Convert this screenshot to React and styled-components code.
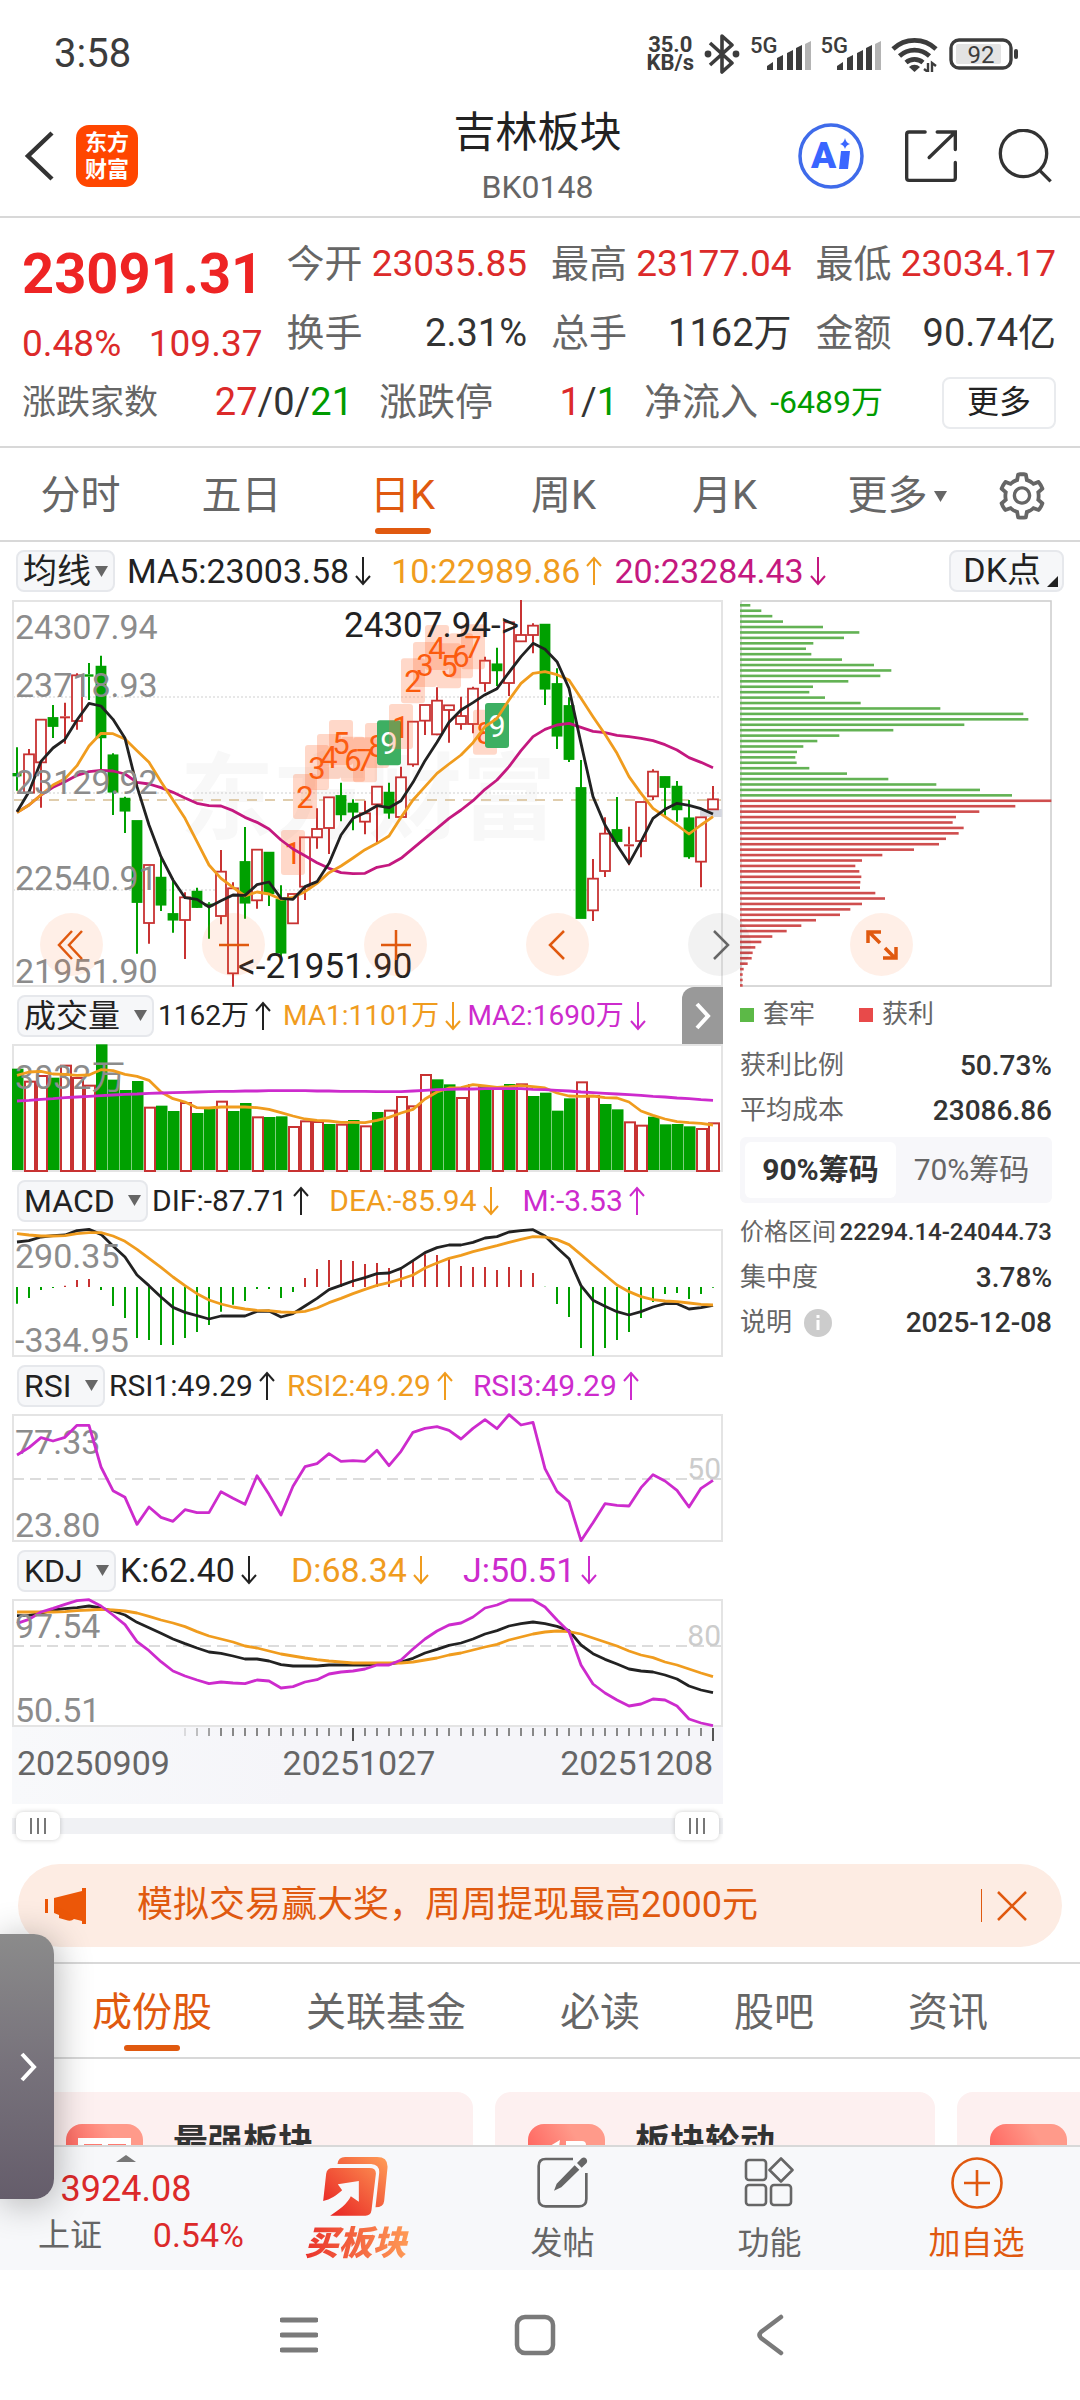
import React, { Fragment } from 'react';
import styled, { createGlobalStyle, css } from 'styled-components';
import { AiOutlineSetting } from 'react-icons/ai';

const colors = {
  text: '#222222',
  dark: '#333333',
  gray: '#666666',
  axis: '#8c8c8c',
  red: '#dc2a2a',
  green: '#009b00',
  candleRed: '#c83232',
  candleGreen: '#00a000',
  brand: '#e0590f',
  orange: '#f09c1e',
  magenta: '#c4187f',
  purple: '#cd2bcd',
  line: '#d8d8d8',
  frame: '#e4e4e4',
  panel: '#f6f7f9',
};

const GlobalStyle = createGlobalStyle`
  * {
    box-sizing: border-box;
  }

  body {
    margin: 0;
    background: #ffffff;
    color: ${colors.text};
    font-family: Roboto, 'Noto Sans CJK SC', sans-serif;
    line-height: 1.2;
  }

  button,
  select,
  input {
    margin: 0;
    padding: 0;
    border: 0;
    background: none;
    color: inherit;
    font: inherit;
  }

  svg {
    display: block;
    flex-shrink: 0;
  }
`;

/* ---------- data ---------- */

const COUNT = 59;
const STEP = 12;

// [up, high, open/close top, open/close bottom, low], three units per pixel
const candles = [
  [0, 472, 549, 559, 602],
  [1, 477, 493, 608, 608],
  [1, 388, 389, 517, 653],
  [0, 345, 384, 408, 444],
  [1, 338, 379, 383, 461],
  [1, 250, 256, 393, 419],
  [0, 219, 253, 260, 330],
  [0, 197, 230, 442, 540],
  [0, 490, 496, 605, 675],
  [0, 620, 626, 662, 729],
  [0, 693, 693, 936, 1091],
  [1, 825, 825, 999, 1061],
  [0, 795, 863, 944, 963],
  [0, 865, 972, 989, 1028],
  [1, 907, 922, 990, 1107],
  [0, 893, 905, 951, 953],
  [0, 937, 941, 949, 1046],
  [1, 780, 845, 978, 1003],
  [1, 877, 895, 1150, 1190],
  [0, 711, 816, 938, 986],
  [1, 779, 779, 931, 956],
  [0, 786, 788, 910, 948],
  [0, 886, 930, 1088, 1103],
  [1, 912, 912, 1000, 1000],
  [1, 742, 742, 890, 930],
  [1, 655, 717, 742, 776],
  [1, 622, 622, 714, 792],
  [0, 578, 618, 673, 694],
  [0, 628, 641, 665, 721],
  [1, 632, 670, 695, 733],
  [1, 590, 590, 643, 757],
  [0, 578, 608, 668, 686],
  [1, 530, 562, 681, 681],
  [1, 395, 395, 523, 530],
  [1, 345, 345, 392, 435],
  [1, 292, 332, 433, 436],
  [1, 346, 346, 360, 458],
  [1, 320, 378, 402, 419],
  [1, 290, 296, 402, 430],
  [1, 200, 212, 279, 305],
  [0, 173, 223, 241, 288],
  [1, 93, 97, 279, 318],
  [1, 30, 135, 154, 154],
  [1, 100, 107, 135, 190],
  [0, 104, 104, 296, 345],
  [0, 235, 282, 437, 477],
  [0, 322, 348, 507, 516],
  [0, 510, 594, 984, 984],
  [1, 807, 866, 961, 993],
  [1, 682, 731, 843, 861],
  [0, 621, 720, 753, 768],
  [1, 710, 763, 769, 826],
  [1, 636, 636, 753, 802],
  [1, 538, 545, 619, 630],
  [0, 560, 561, 591, 677],
  [0, 573, 590, 658, 695],
  [0, 630, 685, 799, 806],
  [1, 682, 682, 815, 892],
  [1, 588, 628, 658, 658],
];

const ma5 = [
  665, 605, 514, 474, 448, 390, 340, 348, 388, 445, 590, 705, 800, 870, 923,
  928, 951, 932, 915, 916, 884, 876, 925, 928, 890, 875, 820, 735, 685, 668,
  647, 653, 632, 577, 512, 457, 397, 360, 338, 314, 296, 247, 200, 160, 178,
  215, 295, 460, 620, 705, 765, 820, 755, 685, 658, 640, 646, 656, 672,
];
const ma10 = [
  668, 645, 615, 585, 566, 527, 468, 430, 431, 447, 482, 517, 575, 630, 685,
  755, 825, 865, 892, 918, 906, 912, 928, 922, 905, 880, 848, 828, 804, 779,
  760, 738, 682, 630, 590, 550, 522, 495, 458, 410, 385, 330, 280, 250, 245,
  254, 270, 325, 380, 433, 490, 560, 610, 655, 680, 705, 732, 705, 680,
];
const ma20 = [
  667, 645, 615, 592, 575, 556, 545, 541, 543, 552, 577, 582, 593, 607, 624,
  640, 647, 648, 662, 682, 697, 717, 750, 777, 797, 818, 835, 848, 851, 850,
  832, 825, 805, 775, 745, 715, 685, 660, 632, 598, 570, 530, 482, 440, 418,
  405, 400, 412, 424, 428, 436, 440, 445, 452, 464, 480, 503, 517, 533,
];

// top of each 1-9 marker, from the 24th session on
const signals = [
  720, 552, 465, 432, 390, 440, 442, 399, 391, 342, 205, 156, 105, 160, 130,
  103, 359, 339,
];

const volumes = [
  235, 271, 254, 262, 223, 260, 283, 162, 268, 299, 272, 349, 346, 362, 335,
  368, 355, 331, 362, 338, 378, 380, 378, 407, 390, 392, 401, 400, 389, 405,
  365, 358, 317, 345, 251, 267, 282, 320, 281, 287, 288, 281, 279, 317, 307,
  361, 324, 273, 314, 341, 357, 393, 403, 379, 402, 401, 408, 413, 396,
];
const volumeUp =
  '01101110000100100100100111010101111001101010000110011000011';
const volumeMa1 = [
  255, 245, 243, 251, 252, 255, 254, 238, 241, 252, 258, 270, 305, 325, 335,
  352, 353, 350, 350, 350, 352, 357, 367, 377, 386, 390, 392, 396, 396, 397,
  390, 381, 368, 357, 326, 305, 293, 292, 283, 287, 291, 289, 286, 289, 293,
  308, 317, 318, 317, 322, 323, 335, 362, 375, 386, 394, 397, 399, 404,
];
const volumeMa2 = [
  332, 330, 327, 325, 322, 320, 318, 316, 314, 312, 311, 309, 308, 307, 306,
  305, 304, 303, 303, 302, 302, 301, 301, 301, 301, 302, 302, 303, 303, 303,
  304, 304, 304, 302, 300, 298, 297, 296, 296, 295, 295, 295, 295, 297, 298,
  300, 302, 305, 307, 309, 311, 313, 315, 318, 320, 323, 325, 328, 330,
];

const macdBars = [
  941, 924, 900, 894, 887, 870, 867, 900, 948, 984, 1044, 1050, 1065, 1065,
  1044, 1026, 1005, 965, 944, 933, 897, 897, 924, 906, 864, 837, 810, 810, 813,
  822, 819, 834, 836, 812, 793, 795, 807, 828, 831, 831, 840, 831, 840, 849,
  890, 942, 981, 1074, 1098, 1074, 1050, 1026, 984, 936, 912, 909, 927, 912,
  893,
];
const dif = [
  756, 752, 741, 737, 735, 722, 718, 733, 768, 801, 855, 887, 921, 952, 967,
  977, 987, 978, 978, 978, 964, 963, 981, 971, 948, 925, 899, 886, 873, 863,
  851, 849, 835, 812, 788, 773, 765, 765, 757, 744, 740, 726, 722, 719, 738,
  773, 806, 887, 931, 949, 965, 975, 965, 951, 941, 941, 957, 953, 946,
];
const dea = [
  731, 735, 738, 738, 737, 731, 728, 728, 738, 754, 778, 805, 832, 861, 887,
  911, 930, 942, 951, 957, 961, 962, 966, 967, 964, 954, 938, 925, 911, 898,
  886, 878, 867, 855, 834, 819, 805, 796, 785, 776, 767, 757, 748, 740, 741,
  749, 764, 794, 825, 855, 885, 905, 920, 929, 933, 935, 939, 943, 945,
];

const rsi = [
  284, 262, 232, 242, 231, 195, 195, 320, 391, 411, 492, 440, 471, 483, 448,
  457, 457, 394, 414, 432, 346, 402, 464, 378, 319, 310, 280, 303, 301, 303,
  270, 316, 273, 216, 204, 199, 210, 236, 204, 178, 205, 163, 194, 186, 325,
  393, 424, 541, 487, 430, 435, 437, 382, 343, 362, 390, 440, 384, 360,
];

const kdjK = [
  767, 766, 760, 750, 746, 743, 738, 744, 753, 765, 787, 803, 820, 837, 851,
  864, 876, 880, 888, 897, 897, 903, 914, 918, 918, 918, 915, 915, 915, 915,
  914, 912, 906, 895, 879, 868, 856, 849, 837, 822, 812, 798, 791, 786, 791,
  799, 812, 855, 881, 898, 912, 927, 933, 936, 945, 957, 978, 990, 998,
];
const kdjD = [
  756, 756, 756, 756, 755, 752, 750, 748, 750, 753, 759, 769, 780, 789, 800,
  815, 828, 837, 846, 858, 864, 873, 882, 888, 894, 899, 903, 906, 909, 909,
  909, 909, 909, 906, 900, 894, 885, 879, 870, 861, 853, 840, 831, 822, 816,
  813, 815, 822, 834, 846, 858, 873, 885, 893, 906, 915, 927, 939, 950,
];
const kdjJ = [
  790, 778, 756, 745, 733, 722, 719, 738, 765, 794, 845, 872, 905, 933, 948,
  960, 971, 966, 969, 971, 960, 963, 984, 980, 966, 959, 942, 936, 933, 927,
  915, 915, 900, 867, 837, 813, 795, 789, 771, 744, 735, 720, 720, 720, 741,
  780, 815, 915, 972, 999, 1020, 1038, 1032, 1017, 1020, 1038, 1077, 1089,
  1097,
];

const trapped = [
  31, 64, 97, 129, 249, 358, 312, 220, 198, 214, 306, 402, 454, 421, 325, 219,
  208, 255, 362, 601, 850, 865, 673, 460, 298, 232, 190, 171, 166, 170, 208,
  321, 445, 589, 720, 816,
];
const profit = [
  934, 826, 718, 648, 638, 671, 656, 618, 597, 522, 427, 366, 346, 358, 364,
  361, 360, 406, 435, 366, 331, 300, 228, 184, 140, 97, 64, 46, 38, 35, 23, 11,
  8, 8, 8,
];

const quotes = [
  [
    { label: '今开', value: '23035.85', tone: 'red' },
    { label: '换手', value: '2.31%' },
  ],
  [
    { label: '最高', value: '23177.04', tone: 'red' },
    { label: '总手', value: '1162万' },
  ],
  [
    { label: '最低', value: '23034.17', tone: 'red' },
    { label: '金额', value: '90.74亿' },
  ],
];

const periods = ['分时', '五日', '日K', '周K', '月K'];
const sections = ['成份股', '关联基金', '必读', '股吧', '资讯'];

/* ---------- status bar and header ---------- */

const Screen = styled.div`
  display: flex;
  flex-direction: column;
  height: 100vh;
  overflow: hidden;
  background: #ffffff;
`;

const StatusBar = styled.div`
  display: flex;
  align-items: center;
  justify-content: space-between;
  height: 108px;
  padding: 0 61px 0 54px;
  color: #3c3c3c;
`;

const Clock = styled.span`
  font-size: 40px;
`;

const StatusIcons = styled.div`
  display: flex;
  align-items: center;
  gap: 10px;
`;

const Speed = styled.span`
  font-size: 22px;
  font-weight: 700;
  line-height: 17px;
  text-align: center;

  span {
    display: block;
    line-height: 18px;
  }
`;

const Signal = styled.div`
  display: flex;
  align-items: flex-end;
  height: 32px;
`;

const SignalLabel = styled.span`
  align-self: flex-start;
  margin-right: -11px;
  font-size: 22px;
  font-weight: 500;
  line-height: 16px;
`;

const Header = styled.header`
  display: grid;
  grid-template-columns: 1fr auto 1fr;
  align-items: center;
  height: 110px;
  padding: 0 28px 12px 23px;
  border-bottom: 2px solid ${colors.line};
`;

const HeaderSide = styled.div`
  display: flex;
  align-items: center;
  justify-content: ${({ $end }) => ($end ? 'flex-end' : 'flex-start')};
  gap: ${({ $end }) => ($end ? '40px' : '21px')};
`;

const IconButton = styled.button`
  display: flex;
  align-items: center;
  justify-content: center;
  color: ${({ $color }) => $color || colors.dark};
`;

const Logo = styled.span`
  display: flex;
  flex-direction: column;
  align-items: center;
  justify-content: center;
  width: 62px;
  height: 62px;
  border-radius: 13px;
  background: #ff4600;
  color: #ffffff;
  font-size: 22px;
  font-weight: 700;
  line-height: 27px;
`;

const Title = styled.div`
  text-align: center;

  h1 {
    margin: 0 0 12px;
    font-size: 42px;
    font-weight: 400;
    line-height: 50px;
  }

  p {
    margin: 0;
    color: ${colors.gray};
    font-size: 32px;
    line-height: 34px;
  }
`;

/* ---------- quote ---------- */

const Main = styled.main`
  flex: 1;
  min-height: 0;
  overflow-y: auto;
  scrollbar-width: none;
`;

const Quote = styled.section`
  padding: 12px 24px 9px 22px;
  border-bottom: 2px solid ${colors.line};
`;

const QuoteGrid = styled.div`
  display: grid;
  grid-template-columns: repeat(4, minmax(0, 1fr));
  column-gap: 24px;
`;

const Price = styled.div`
  height: 89px;
  color: #ee2424;
  font-size: 56px;
  font-weight: 700;
  line-height: 89px;
`;

const Change = styled.div`
  display: flex;
  justify-content: space-between;
  height: 49px;
  color: ${colors.red};
  font-size: 37px;
  line-height: 49px;
`;

const Field = styled.div`
  display: flex;
  align-items: center;
  justify-content: space-between;
  height: 69px;
  color: ${colors.gray};
  font-size: ${({ $small }) => ($small ? '34px' : '38px')};
  white-space: nowrap;
`;

const tones = {
  red: css`
    color: ${colors.red};
    font-size: 37px;
  `,
  small: css`
    color: ${colors.green};
    font-size: 32px;
  `,
  plain: css`
    color: ${colors.dark};
    font-size: 38px;
  `,
};

const Value = styled.span`
  ${({ $tone }) => tones[$tone] || tones.plain};
`;

const Up = styled.span`
  color: ${colors.red};
`;

const Down = styled.span`
  color: ${colors.green};
`;

const BreadthGrid = styled.div`
  display: grid;
  grid-template-columns: 331fr 239fr 239fr 147fr;
  align-items: center;
  column-gap: 26px;
`;

const MoreButton = styled.button`
  justify-self: end;
  width: 114px;
  height: 52px;
  border: 2px solid #e9ebee;
  border-radius: 8px;
  color: ${colors.text};
  font-size: 32px;
`;

/* ---------- tabs ---------- */

const PeriodTabs = styled.nav`
  display: grid;
  grid-template-columns: repeat(5, 161fr) 184fr 66fr 25fr;
  height: 94px;
  padding-top: 4px;
  border-bottom: 2px solid ${colors.line};
`;

const Tab = styled.button`
  display: flex;
  position: relative;
  align-items: center;
  justify-content: center;
  gap: 6px;
  color: ${({ $active }) => ($active ? colors.brand : colors.gray)};
  font-size: 40px;
  white-space: nowrap;

  &::after {
    position: absolute;
    bottom: 6px;
    left: calc(50% - 28px);
    width: 56px;
    height: 6px;
    border-radius: 3px;
    background: ${({ $active }) => ($active ? colors.brand : 'transparent')};
    content: '';
  }
`;

const SectionTabs = styled.nav`
  display: flex;
  gap: 94px;
  height: 97px;
  padding: 4px 0 0 92px;
  border-top: 2px solid ${colors.line};
  border-bottom: 2px solid ${colors.line};
`;

/* ---------- charts ---------- */

const Charts = styled.section`
  position: relative;
  padding: 0 28px 0 12px;
`;

const Columns = styled.div`
  display: grid;
  grid-template-columns: 711fr 312fr;
  column-gap: 17px;
`;

const AverageRow = styled.div`
  display: flex;
  align-items: center;
  height: 58px;
  margin-right: -12px;
  padding-left: 4px;
`;

const IndicatorRow = styled.div`
  display: flex;
  align-items: center;
  height: 57px;
  padding-left: 5px;
`;

const Picker = styled.label`
  display: flex;
  align-items: center;
  gap: ${({ $tight }) => ($tight ? '4px' : '13px')};
  height: 42px;
  margin-right: ${({ $tight }) => ($tight ? '12px' : '4px')};
  padding: 0 5px;
  border: 2px solid #e6e8ec;
  border-radius: 8px;
  background: ${colors.panel};

  select {
    appearance: none;
    font-size: ${({ $tight }) => ($tight ? '34px' : '32px')};
    line-height: 38px;
  }
`;

const DkButton = styled.button`
  display: flex;
  align-items: flex-end;
  gap: 6px;
  height: 42px;
  margin-left: auto;
  padding: 0 4px 3px 12px;
  border: 2px solid #e6e8ec;
  border-radius: 8px;
  background: ${colors.panel};
  color: ${colors.text};
  font-size: 34px;
  line-height: 34px;
`;

const Reading = styled.span`
  display: flex;
  align-items: center;
  gap: 6px;
  margin-right: ${({ $gap }) => $gap || 12}px;
  color: ${({ $color }) => $color || colors.text};
  font-size: ${({ $size }) => $size}px;
  white-space: nowrap;
`;

const ExpandButton = styled.button`
  display: flex;
  align-items: center;
  justify-content: center;
  align-self: stretch;
  width: 41px;
  margin-left: auto;
  border-radius: 12px 0 0 0;
  background: #999999;
`;

const Plot = styled.svg`
  width: 100%;
  height: auto;
  overflow: visible;
`;

const AxisPanel = styled.div`
  height: 77px;
  background: linear-gradient(90deg, #f8f9fb, #f5f5f9 40%);
`;

const Dates = styled.div`
  display: grid;
  grid-template-columns: 266fr 278fr auto;
  margin-top: 3px;
  padding: 0 10px 0 5px;
  color: ${colors.gray};
  font-size: 34px;
  line-height: 38px;
`;

const Range = styled.div`
  display: grid;
  align-items: center;
  height: 44px;
  padding: 0 4px;
  background: linear-gradient(#f0f1f4, #f0f1f4) center / 100% 16px no-repeat;

  input {
    grid-area: 1 / 1;
    width: 100%;
    appearance: none;
    pointer-events: none;
  }

  input::-webkit-slider-thumb {
    width: 44px;
    height: 28px;
    border-radius: 7px;
    background:
      linear-gradient(#777777, #777777) 14px 6px / 2px 16px no-repeat,
      linear-gradient(#777777, #777777) 21px 6px / 2px 16px no-repeat,
      linear-gradient(#777777, #777777) 28px 6px / 2px 16px no-repeat,
      #ffffff;
    box-shadow: 0 0 5px rgba(0, 0, 0, 0.2);
    appearance: none;
    pointer-events: auto;
  }
`;

const PlotTools = styled.div`
  display: flex;
  position: absolute;
  top: 371px;
  right: 167px;
  left: 40px;
  justify-content: space-between;
`;

const ToolButton = styled.button`
  display: flex;
  align-items: center;
  justify-content: center;
  width: 63px;
  height: 63px;
  border-radius: 50%;
  background: ${({ $muted }) =>
    $muted ? 'rgba(0, 0, 0, 0.05)' : 'rgba(255, 100, 20, 0.1)'};
  color: ${({ $muted }) => ($muted ? colors.gray : colors.brand)};
`;

/* ---------- chip distribution ---------- */

const Legend = styled.div`
  display: flex;
  gap: 44px;
  height: 56px;
`;

const LegendItem = styled.span`
  display: flex;
  align-items: center;
  gap: 9px;
  color: ${colors.gray};
  font-size: 26px;

  &::before {
    width: 14px;
    height: 14px;
    background: ${({ $color }) => $color};
    content: '';
  }
`;

const Stat = styled.div`
  display: flex;
  align-items: center;
  justify-content: space-between;
  height: 45px;
  color: ${colors.gray};
  font-size: ${({ $dense }) => ($dense ? '24px' : '26px')};
  white-space: nowrap;

  strong {
    color: ${colors.dark};
    font-size: ${({ $dense }) => ($dense ? '24px' : '28px')};
    font-weight: 500;
  }

  span {
    display: flex;
    align-items: center;
    gap: 12px;
  }
`;

const Segmented = styled.div`
  display: grid;
  grid-template-columns: 1fr 1fr;
  height: 66px;
  margin: 4px 0 7px;
  padding: 5px;
  border-radius: 6px;
  background: #f7f7fa;
`;

const Segment = styled.button`
  border-radius: 6px;
  background: ${({ $active }) => ($active ? '#ffffff' : 'transparent')};
  color: ${({ $active }) => ($active ? colors.dark : colors.gray)};
  font-size: 30px;
  font-weight: ${({ $active }) => ($active ? 700 : 400)};
  white-space: nowrap;
`;

/* ---------- lower part ---------- */

const Banner = styled.aside`
  display: flex;
  align-items: center;
  height: 83px;
  margin: 16px 18px 15px;
  padding: 0 34px 0 27px;
  border-radius: 42px;
  background: #fdece3;
  color: ${colors.brand};
  font-size: 36px;
`;

const BannerLink = styled.a`
  flex: 1;
  margin-left: 50px;
  color: inherit;
  text-decoration: none;
`;

const BannerClose = styled.button`
  display: flex;
  align-items: center;
  height: 33px;
  padding-left: 14px;
  border-left: 1px solid ${colors.brand};
`;

const Cards = styled.div`
  display: flex;
  gap: 22px;
  padding: 33px 0 0 33px;
  overflow: hidden;
`;

const Card = styled.a`
  display: flex;
  flex: 0 0 440px;
  align-items: flex-start;
  gap: 30px;
  height: 140px;
  padding: 32px 33px;
  border-radius: 16px;
  background: #fdf0f0;
  color: ${colors.dark};
  font-size: 35px;
  font-weight: 700;
  line-height: 38px;
  text-decoration: none;
`;

const CardIcon = styled.span`
  display: block;
  width: 77px;
  height: 77px;
  border-radius: 16px;
  background: linear-gradient(60deg, #ff4a4a, #ff9a8a 70%);
`;

const BottomBar = styled.footer`
  display: grid;
  grid-template-columns: 252fr repeat(4, 207fr);
  height: 125px;
  border-top: 2px solid ${colors.line};
  background: #f7f8fa;
`;

const IndexBox = styled.a`
  display: flex;
  flex-direction: column;
  align-items: center;
  gap: 2px;
  padding-top: 8px;
  color: ${colors.red};
  font-size: 36px;
  line-height: 50px;
  text-decoration: none;

  p {
    display: flex;
    align-self: stretch;
    justify-content: space-between;
    margin: 0 8px 0 38px;
    font-size: 34px;
    line-height: 38px;
  }

  small {
    color: ${colors.gray};
    font-size: 32px;
  }
`;

const Action = styled.button`
  display: flex;
  flex-direction: column;
  align-items: center;
  justify-content: space-between;
  padding: 10px 0 8px;
  color: ${({ $color }) => $color || colors.gray};
  font-size: 32px;
  line-height: 38px;
`;

const BuyLabel = styled.span`
  padding: 0 4px;
  background: linear-gradient(90deg, #e92f2a, #ff9d57);
  background-clip: text;
  color: transparent;
  font-size: 34px;
  font-style: italic;
  font-weight: 900;
`;

const SystemNav = styled.nav`
  display: flex;
  align-items: center;
  justify-content: center;
  gap: 196px;
  height: 130px;
  padding-right: 10px;
  background: #ffffff;
`;

const Drawer = styled.button`
  display: flex;
  position: fixed;
  bottom: 201px;
  left: 0;
  align-items: center;
  justify-content: flex-end;
  width: 54px;
  height: 265px;
  padding-right: 17px;
  border-radius: 0 20px 20px 0;
  background: linear-gradient(#8b8b8b, #77727b 50%, #655d6b);
  box-shadow: 2px 4px 36px rgba(0, 0, 0, 0.3);
`;

/* ---------- pieces ---------- */

const x = i => 5 + i * STEP;

const Curve = ({ values, top, color }) => (
  <polyline
    points={values.map((v, i) => `${x(i)},${(v - top) / 3}`).join(' ')}
    fill="none"
    stroke={color}
    strokeWidth="2.8"
    strokeLinejoin="round"
  />
);

const Frame = ({ height }) => (
  <rect
    x="1"
    y="1"
    width="709"
    height={height - 2}
    fill="none"
    stroke={colors.frame}
    strokeWidth="2"
  />
);

const Label = ({ y, children, ...rest }) => (
  <text x="3" y={y} fontSize="34" fill={colors.axis} {...rest}>
    {children}
  </text>
);

const Arrow = ({ up }) => (
  <svg width="16" height="30" viewBox="0 0 16 30" aria-hidden="true">
    <path
      d={up ? 'M8 29V2M1 10L8 2l7 8' : 'M8 1v27M1 20l7 8 7-8'}
      fill="none"
      stroke="currentColor"
      strokeWidth="2"
    />
  </svg>
);

const Caret = ({ size = 13 }) => (
  <svg width={size} height={size} viewBox="0 0 14 14" aria-hidden="true">
    <path d="M0 1h14L7 13z" fill="#666666" />
  </svg>
);

const IndicatorPicker = ({ name, label, tight }) => (
  <Picker $tight={tight}>
    <select aria-label={label}>
      <option>{name}</option>
    </select>
    <Caret />
  </Picker>
);

const SignalBars = () => (
  <Signal>
    <SignalLabel>5G</SignalLabel>
    <svg width="44" height="29" viewBox="0 0 44 29" aria-hidden="true">
      <g fill="#3c3c3c">
        <path d="M0 29v-4l6-4v8zM10 29V17l6-3v15zM20 29V12l6-3v20zM29 29V7l6-3v25z" />
      </g>
      <path d="M38 29V3l6-3v29z" fill="#b4b4b4" />
    </svg>
  </Signal>
);

const KLineChart = () => (
  <Plot viewBox="0 0 711 387" role="img" aria-label="日K线">
    <text x="168" y="232" fontSize="94" fontWeight="700" fill="#f8f8f8">
      东方财富
    </text>
    {[97, 193, 290].map(y => (
      <path key={y} d={`M1 ${y}H710`} stroke="#cfcfcf" strokeDasharray="2 2" />
    ))}
    <path d="M1 200H710" stroke="#d6bd92" strokeWidth="1.5" strokeDasharray="10 8" />
    <Frame height={387} />
    <rect x="688" y="209" width="22" height="8" fill="#d5d7df" />
    {candles.map(([up, high, top, bottom, low], i) => {
      const color = up ? colors.candleRed : colors.candleGreen;
      const y = v => (v - 30) / 3;
      const bodyHeight = Math.max((bottom - top) / 3, 2);
      return (
        <Fragment key={i}>
          <path
            d={`M${x(i)} ${y(high)}V${y(top)}M${x(i)} ${y(bottom)}V${y(low)}`}
            stroke={color}
            strokeWidth="2"
          />
          <rect
            x={x(i) - (up ? 5 : 4.5)}
            y={y(top)}
            width={up ? 10 : 9}
            height={bodyHeight}
            fill={up && bodyHeight > 3 ? '#ffffff' : color}
            stroke={up && bodyHeight <= 3 ? 'none' : color}
            strokeWidth={bodyHeight <= 4 ? 0 : 1.8}
          />
        </Fragment>
      );
    })}
    {signals.map((top, i) => {
      const number = (i % 9) + 1;
      const last = number === 9;
      const cx = x(i + 23);
      const y = (top - 30) / 3;
      return (
        <Fragment key={i}>
          <rect
            x={cx - 12}
            y={y}
            width="24"
            height="45"
            rx="3"
            fill={last ? '#3daf62' : '#ff6a2e'}
            fillOpacity={last ? 1 : 0.26}
          />
          <text
            x={cx}
            y={y + 34}
            fontSize="31"
            textAnchor="middle"
            fill={last ? '#ffffff' : '#fb5a0c'}
          >
            {number}
          </text>
        </Fragment>
      );
    })}
    <Curve values={ma20} top={30} color={colors.magenta} />
    <Curve values={ma10} top={30} color={colors.orange} />
    <Curve values={ma5} top={30} color={colors.text} />
    <Label y={39}>24307.94</Label>
    <Label y={97}>23718.93</Label>
    <Label y={194}>23129.92</Label>
    <Label y={290}>22540.91</Label>
    <Label y={383}>21951.90</Label>
    <Label x={507} y={37} fill={colors.text} fontSize={35} textAnchor="end">
      {'24307.94->'}
    </Label>
    <Label x={226} y={378} fill={colors.text} fontSize={35}>
      {'<-21951.90'}
    </Label>
  </Plot>
);

const VolumeChart = () => (
  <Plot viewBox="0 0 711 128" role="img" aria-label="成交量">
    <Frame height={128} />
    {volumes.map((v, i) => {
      const up = volumeUp[i] === '1';
      const y = (v - 161) / 3;
      return (
        <rect
          key={i}
          x={i * STEP + (up ? 1 : 0)}
          y={y + (up ? 1 : 0)}
          width={up ? 10 : 11.5}
          height={126 - y}
          fill={up ? '#ffffff' : colors.candleGreen}
          stroke={up ? colors.candleRed : 'none'}
          strokeWidth="2"
        />
      );
    })}
    <Label y={45}>3032万</Label>
    <Curve values={volumeMa1} top={161} color={colors.orange} />
    <Curve values={volumeMa2} top={161} color={colors.purple} />
  </Plot>
);

const MacdChart = () => (
  <Plot viewBox="0 0 711 128" role="img" aria-label="MACD">
    <Frame height={128} />
    {macdBars.map((v, i) => (
      <path
        key={i}
        d={`M${x(i)} 58V${(v - 717) / 3}`}
        stroke={v < 890 ? colors.candleRed : colors.candleGreen}
        strokeWidth="2"
      />
    ))}
    <Curve values={dif} top={717} color={colors.text} />
    <Curve values={dea} top={717} color={colors.orange} />
    <Label y={39}>290.35</Label>
    <Label y={123}>-334.95</Label>
  </Plot>
);

const RsiChart = () => (
  <Plot viewBox="0 0 711 128" role="img" aria-label="RSI">
    <Frame height={128} />
    <path d="M1 65H710" stroke="#dcdcdc" strokeWidth="2" strokeDasharray="11 6" />
    <Label x={709} y={65} fill="#cccccc" textAnchor="end" fontSize={30}>
      50
    </Label>
    <Label y={40}>77.33</Label>
    <Label y={123}>23.80</Label>
    <Curve values={rsi} top={161} color={colors.purple} />
  </Plot>
);

const KdjChart = () => (
  <Plot viewBox="0 0 711 128" role="img" aria-label="KDJ">
    <Frame height={128} />
    <path d="M1 47H710" stroke="#dcdcdc" strokeWidth="2" strokeDasharray="11 6" />
    <Label x={709} y={47} fill="#cccccc" textAnchor="end" fontSize={30}>
      80
    </Label>
    <Curve values={kdjK} top={717} color={colors.text} />
    <Curve values={kdjD} top={717} color={colors.orange} />
    <Curve values={kdjJ} top={717} color={colors.purple} />
    <Label y={39}>97.54</Label>
    <Label y={123}>50.51</Label>
  </Plot>
);

const Ticks = () => (
  <Plot viewBox="0 0 711 14" aria-hidden="true">
    {Array.from({ length: COUNT }, (_, i) => i)
      .filter(i => i >= 14)
      .map(i => {
        const major = i === 28 || i === 58;
        return (
          <path
            key={i}
            d={`M${x(i)} 1V${major ? 14 : 9}`}
            stroke={major ? '#555555' : '#888888'}
            strokeWidth="2"
            opacity={Math.min(1, (i - 13) / 4)}
          />
        );
      })}
  </Plot>
);

const ChipChart = () => (
  <Plot viewBox="0 0 312 387" role="img" aria-label="筹码分布">
    <rect
      x="1"
      y="1"
      width="310"
      height="385"
      fill="none"
      stroke="#cccccc"
      strokeWidth="1.5"
    />
    {[...trapped, ...profit].map((w, i) => (
      <rect
        key={i}
        x="0"
        y={4 + i * 5.43}
        width={w / 3}
        height="2.6"
        fill={i < trapped.length ? '#63b254' : '#cf4e4e'}
      />
    ))}
  </Plot>
);

const ToolIcon = ({ d, width = 2.5 }) => (
  <svg width="32" height="32" viewBox="0 0 32 32" aria-hidden="true">
    <path d={d} fill="none" stroke="currentColor" strokeWidth={width} />
  </svg>
);

const App = () => (
  <Screen>
    <GlobalStyle />

    <StatusBar>
      <Clock>3:58</Clock>
      <StatusIcons>
        <Speed>
          <span>35.0</span>
          <span>KB/s</span>
        </Speed>
        <svg width="36" height="40" viewBox="0 0 36 40" aria-hidden="true">
          <path
            d="M6 9l22 20-10 9V2l10 9L6 31"
            fill="none"
            stroke="#3c3c3c"
            strokeWidth="3.6"
            strokeLinejoin="round"
          />
          <circle cx="4" cy="20" r="3.4" fill="#3c3c3c" />
          <circle cx="32" cy="20" r="3.4" fill="#3c3c3c" />
        </svg>
        <SignalBars />
        <SignalBars />
        <svg width="48" height="36" viewBox="0 0 48 36" aria-hidden="true">
          <g fill="none" stroke="#3c3c3c" strokeWidth="4.6">
            <path d="M2 13a31 31 0 0 1 43 0" />
            <path d="M8.500 20a22 22 0 0 1 30 0" />
            <path d="M15 26.500a13 13 0 0 1 17 0" />
          </g>
          <path d="M18 31a8 8 0 0 1 11 0l-5.500 5z" fill="#3c3c3c" />
          <path d="M37 27v9m-4-3l4 3M41 36v-9l4 3" stroke="#3c3c3c" strokeWidth="2.400" fill="none" />
        </svg>
        <svg width="70" height="32" viewBox="0 0 70 32" aria-hidden="true">
          <rect x="2" y="2" width="60" height="28" rx="8" fill="none" stroke="#3c3c3c" strokeWidth="3.400" />
          <rect x="7" y="6" width="45" height="20" rx="2" fill="#e3e3e3" />
          <rect x="65" y="11" width="4" height="10" rx="2" fill="#3c3c3c" />
          <text x="32" y="25" fontSize="24" textAnchor="middle" fill="#3c3c3c">
            92
          </text>
        </svg>
      </StatusIcons>
    </StatusBar>

    <Header>
      <HeaderSide>
        <IconButton aria-label="返回">
          <svg width="32" height="52" viewBox="0 0 32 52">
            <path d="M29 3L5 26l24 23" fill="none" stroke="currentColor" strokeWidth="4.500" />
          </svg>
        </IconButton>
        <Logo>
          <span>东方</span>
          <span>财富</span>
        </Logo>
      </HeaderSide>
      <Title>
        <h1>吉林板块</h1>
        <p>BK0148</p>
      </Title>
      <HeaderSide $end>
        <IconButton aria-label="AI">
          <svg width="66" height="66" viewBox="0 0 66 66">
            <circle cx="33" cy="33" r="31" fill="none" stroke="#3f6bea" strokeWidth="3.500" />
            <text x="13" y="45" fontSize="37" fontWeight="900" fill="#3a66ff">
              A
            </text>
            <path d="M43 28h9l-2 18h-9z" fill="#3a66ff" />
            <path d="M47 15q1 5 5 6-4 1-5 5-1-4-5-5 4-1 5-6z" fill="#3a66ff" />
          </svg>
        </IconButton>
        <IconButton aria-label="分享">
          <svg width="54" height="54" viewBox="790 327 161 161">
            <path
              d="M853 336H805Q798 336 798 343V473Q798 480 805 480H936Q943 480 943 473V427M889 336H943V388M941 338L865 412"
              fill="none"
              stroke="currentColor"
              strokeWidth="10"
              strokeLinecap="round"
            />
          </svg>
        </IconButton>
        <IconButton aria-label="搜索">
          <svg width="54" height="54" viewBox="1073 325 163 163">
            <circle cx="1150" cy="399" r="70" fill="none" stroke="currentColor" strokeWidth="10" />
            <path d="M1198 449L1232 483" stroke="currentColor" strokeWidth="10" />
          </svg>
        </IconButton>
      </HeaderSide>
    </Header>

    <Main>
      <Quote>
        <QuoteGrid>
          <div>
            <Price>23091.31</Price>
            <Change>
              <span>0.48%</span>
              <span>109.37</span>
            </Change>
          </div>
          {quotes.map(column => (
            <div key={column[0].label}>
              {column.map(({ label, value, tone }) => (
                <Field key={label}>
                  {label}
                  <Value $tone={tone}>{value}</Value>
                </Field>
              ))}
            </div>
          ))}
        </QuoteGrid>
        <BreadthGrid>
          <Field $small>
            涨跌家数
            <Value>
              <Up>27</Up>/0/<Down>21</Down>
            </Value>
          </Field>
          <Field>
            涨跌停
            <Value>
              <Up>1</Up>/<Down>1</Down>
            </Value>
          </Field>
          <Field>
            净流入
            <Value $tone="small">-6489万</Value>
          </Field>
          <MoreButton>更多</MoreButton>
        </BreadthGrid>
      </Quote>

      <PeriodTabs>
        {periods.map(name => (
          <Tab key={name} $active={name === '日K'}>
            {name}
          </Tab>
        ))}
        <Tab>
          更多
          <Caret />
        </Tab>
        <IconButton aria-label="设置" $color={colors.gray}>
          <AiOutlineSetting size={54} />
        </IconButton>
      </PeriodTabs>

      <Charts>
        <AverageRow>
          <IndicatorPicker name="均线" label="主图指标" tight />
          <Reading $size={34} $gap={20}>
            MA5:23003.58
            <Arrow />
          </Reading>
          <Reading $size={34} $color={colors.orange}>
            10:22989.86
            <Arrow up />
          </Reading>
          <Reading $size={34} $color={colors.magenta}>
            20:23284.43
            <Arrow />
          </Reading>
          <DkButton>
            DK点
            <svg width="11" height="11" viewBox="0 0 11 11" aria-hidden="true">
              <path d="M11 0v11H0z" fill="#222222" />
            </svg>
          </DkButton>
        </AverageRow>

        <Columns>
          <div>
            <KLineChart />
            <IndicatorRow>
              <IndicatorPicker name="成交量" label="副图指标一" />
              <Reading $size={28}>
                1162万
                <Arrow up />
              </Reading>
              <Reading $size={28} $gap={6} $color={colors.orange}>
                MA1:1101万
                <Arrow />
              </Reading>
              <Reading $size={28} $color={colors.purple}>
                MA2:1690万
                <Arrow />
              </Reading>
              <ExpandButton aria-label="收起">
                <svg width="16" height="28" viewBox="0 0 16 28">
                  <path d="M2 2l11 12L2 26" fill="none" stroke="#ffffff" strokeWidth="4" />
                </svg>
              </ExpandButton>
            </IndicatorRow>
            <VolumeChart />
            <IndicatorRow>
              <IndicatorPicker name="MACD" label="副图指标二" />
              <Reading $size={30} $gap={20}>
                DIF:-87.71
                <Arrow up />
              </Reading>
              <Reading $size={30} $gap={24} $color={colors.orange}>
                DEA:-85.94
                <Arrow />
              </Reading>
              <Reading $size={30} $color={colors.purple}>
                M:-3.53
                <Arrow up />
              </Reading>
            </IndicatorRow>
            <MacdChart />
            <IndicatorRow>
              <IndicatorPicker name="RSI" label="副图指标三" />
              <Reading $size={30}>
                RSI1:49.29
                <Arrow up />
              </Reading>
              <Reading $size={30} $gap={20} $color={colors.orange}>
                RSI2:49.29
                <Arrow up />
              </Reading>
              <Reading $size={30} $color={colors.purple}>
                RSI3:49.29
                <Arrow up />
              </Reading>
            </IndicatorRow>
            <RsiChart />
            <IndicatorRow>
              <IndicatorPicker name="KDJ" label="副图指标四" />
              <Reading $size={34} $gap={34}>
                K:62.40
                <Arrow />
              </Reading>
              <Reading $size={34} $gap={34} $color={colors.orange}>
                D:68.34
                <Arrow />
              </Reading>
              <Reading $size={34} $color={colors.purple}>
                J:50.51
                <Arrow />
              </Reading>
            </IndicatorRow>
            <KdjChart />
            <AxisPanel>
              <Ticks />
              <Dates>
                <span>20250909</span>
                <span>20251027</span>
                <span>20251208</span>
              </Dates>
            </AxisPanel>
            <Range>
              <input type="range" aria-label="起始日期" defaultValue="0" />
              <input type="range" aria-label="结束日期" defaultValue="100" />
            </Range>
          </div>

          <div>
            <ChipChart />
            <Legend>
              <LegendItem $color="#5cb947">套牢</LegendItem>
              <LegendItem $color="#e84a4a">获利</LegendItem>
            </Legend>
            <Stat>
              获利比例 <strong>50.73%</strong>
            </Stat>
            <Stat>
              平均成本 <strong>23086.86</strong>
            </Stat>
            <Segmented>
              <Segment $active>90%筹码</Segment>
              <Segment>70%筹码</Segment>
            </Segmented>
            <Stat $dense>
              价格区间 <strong>22294.14-24044.73</strong>
            </Stat>
            <Stat>
              集中度 <strong>3.78%</strong>
            </Stat>
            <Stat>
              <span>
                说明
                <svg width="28" height="28" viewBox="0 0 28 28" aria-hidden="true">
                  <circle cx="14" cy="14" r="14" fill="#cccccc" />
                  <path d="M14 6v3M14 11v10" stroke="#ffffff" strokeWidth="3" />
                </svg>
              </span>
              <strong>2025-12-08</strong>
            </Stat>
          </div>
        </Columns>

        <PlotTools>
          <ToolButton aria-label="最早">
            <ToolIcon d="M16 2L3 16l13 14M26 2L13 16l13 14" />
          </ToolButton>
          <ToolButton aria-label="缩小">
            <ToolIcon d="M1 16h30" />
          </ToolButton>
          <ToolButton aria-label="放大">
            <ToolIcon d="M1 16h30M16 1v30" />
          </ToolButton>
          <ToolButton aria-label="向前">
            <ToolIcon d="M22 2L8 16l14 14" />
          </ToolButton>
          <ToolButton aria-label="向后" $muted>
            <ToolIcon d="M10 2l14 14-14 14" />
          </ToolButton>
          <ToolButton aria-label="全屏">
            <ToolIcon width={3.5} d="M2 14V3h13M3 3l11 11M30 18v11H17M29 29L19 19" />
          </ToolButton>
        </PlotTools>
      </Charts>

      <Banner>
        <svg width="42" height="36" viewBox="0 0 42 36" aria-hidden="true">
          <path
            d="M0 11h3v14H0zM9 10L37 3V0h4v36h-4v-3l-8-2q-3 3-8 1l-7-2v-3l-5-2z"
            fill="#ec5708"
          />
        </svg>
        <BannerLink href="#contest">
          模拟交易赢大奖，周周提现最高2000元
        </BannerLink>
        <BannerClose aria-label="关闭">
          <svg width="32" height="32" viewBox="0 0 32 32">
            <path d="M2 2l28 28M30 2L2 30" stroke="currentColor" strokeWidth="2.500" />
          </svg>
        </BannerClose>
      </Banner>

      <SectionTabs>
        {sections.map(name => (
          <Tab key={name} $active={name === '成份股'}>
            {name}
          </Tab>
        ))}
      </SectionTabs>

      <Cards>
        <Card href="#strongest">
          <CardIcon>
            <svg width="77" height="77" viewBox="0 0 77 77" aria-hidden="true">
              <path d="M12 14h53v40H12z" fill="#ffffff" />
              <path d="M18 20h18v6H18zM42 20h18v6H42z" fill="#ff7a70" />
            </svg>
          </CardIcon>
          最强板块
        </Card>
        <Card href="#rotation">
          <CardIcon>
            <svg width="77" height="77" viewBox="0 0 77 77" aria-hidden="true">
              <path d="M22 22l10-6-2 14zM38 17h16q4 0 4 4v12H38z" fill="#ffffff" />
            </svg>
          </CardIcon>
          板块轮动
        </Card>
        <Card href="#more">
          <CardIcon />
        </Card>
      </Cards>
    </Main>

    <BottomBar>
      <IndexBox href="#index">
        <svg width="20" height="7" viewBox="0 0 20 7" aria-hidden="true">
          <path d="M10 0l10 7H0z" fill="#777777" />
        </svg>
        <span>3924.08</span>
        <p>
          <small>上证</small>
          <span>0.54%</span>
        </p>
      </IndexBox>
      <Action>
        <svg width="65" height="59" viewBox="131 140 194 177" aria-hidden="true">
          <defs>
            <linearGradient id="buy" x1="0" y1="1" x2="1" y2="0">
              <stop offset="0.1" stopColor="#e92a26" />
              <stop offset="1" stopColor="#ff9d57" />
            </linearGradient>
          </defs>
          <path
            d="M174 161Q176 140 197 140H293Q326 140 324 172L314 272Q312 291 288 291L299 188Q301 163 275 161ZM160 173H270Q291 173 289 192L276 300Q274 316 258 316H152C178 300 204 280 214 258L238 274V212L175 222L188 240C172 255 152 268 131 272L140 190Q142 173 160 173Z"
            fill="url(#buy)"
          />
        </svg>
        <BuyLabel>买板块</BuyLabel>
      </Action>
      <Action>
        <svg width="51" height="51" viewBox="770 140 153 153" aria-hidden="true">
          <path
            d="M878 146H796Q775 146 775 167V266Q775 288 796 288H896Q918 288 918 266V188"
            fill="none"
            stroke="currentColor"
            strokeWidth="8"
          />
          <path
            d="M821 241l8-21 54-55 14 13-54 53zM890 158l14-14q7-5 14 1 5 7 0 14l-14 13z"
            fill="currentColor"
          />
        </svg>
        发帖
      </Action>
      <Action>
        <svg width="51" height="51" viewBox="0 0 51 51" aria-hidden="true">
          <g fill="none" stroke="currentColor" strokeWidth="2.600" strokeLinejoin="round">
            <rect x="2" y="3" width="20" height="20" rx="3" />
            <rect x="2" y="28" width="20" height="20" rx="3" />
            <rect x="27" y="28" width="20" height="20" rx="3" />
            <path d="M37 1.500L48.500 13 37 24.500 25.500 13z" />
          </g>
        </svg>
        功能
      </Action>
      <Action $color={colors.brand}>
        <svg width="52" height="52" viewBox="0 0 52 52" aria-hidden="true">
          <g fill="none" stroke="currentColor" strokeWidth="2.600">
            <circle cx="26" cy="26" r="24.500" />
            <path d="M13 26h26M26 13v26" />
          </g>
        </svg>
        加自选
      </Action>
    </BottomBar>

    <SystemNav>
      <IconButton aria-label="菜单" $color="#7a7a7a">
        <svg width="38" height="38" viewBox="0 0 38 38">
          <path d="M2 4h34M2 19h34M2 34h34" stroke="currentColor" strokeWidth="5" strokeLinecap="round" />
        </svg>
      </IconButton>
      <IconButton aria-label="主页" $color="#7a7a7a">
        <svg width="42" height="42" viewBox="0 0 42 42">
          <rect x="3" y="3" width="36" height="36" rx="8" fill="none" stroke="currentColor" strokeWidth="4.500" />
        </svg>
      </IconButton>
      <IconButton aria-label="后退" $color="#7a7a7a">
        <svg width="38" height="42" viewBox="0 0 38 42">
          <path
            d="M29 3L9 18q-3 3 0 6l20 15"
            fill="none"
            stroke="currentColor"
            strokeWidth="4.500"
            strokeLinecap="round"
          />
        </svg>
      </IconButton>
    </SystemNav>

    <Drawer aria-label="展开侧栏">
      <svg width="18" height="30" viewBox="0 0 18 30">
        <path d="M3 2l12 13L3 28" fill="none" stroke="#ffffff" strokeWidth="4" />
      </svg>
    </Drawer>
  </Screen>
);

export default App;
